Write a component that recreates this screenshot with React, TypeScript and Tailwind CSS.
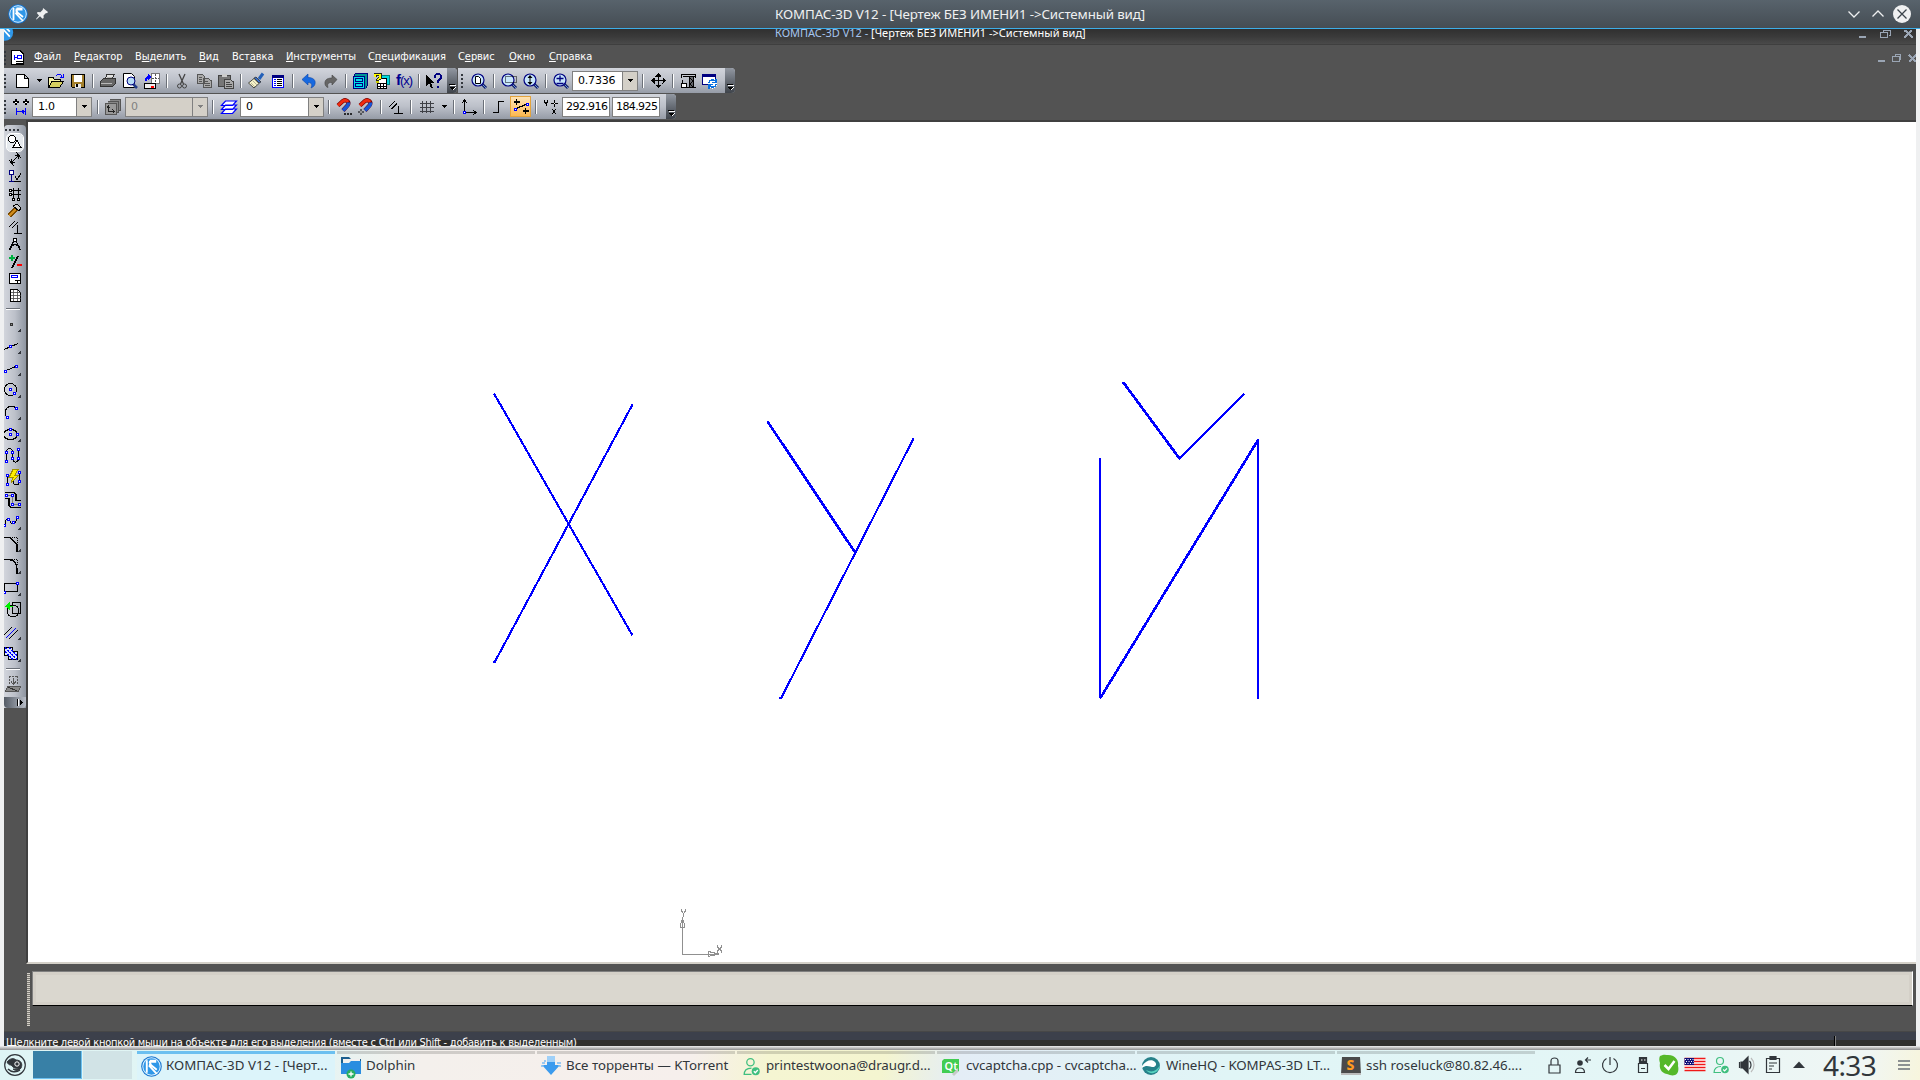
import type { ReactNode } from "react";
import clsx from "clsx";

const NAVY = "#000080";
const BLUE = "#0000ff";

/* ---------- small building blocks ---------- */

function Ico({ children, w = 16, h = 16, smooth = false }: { children: ReactNode; w?: number; h?: number; smooth?: boolean }) {
  return (
    <svg width={w} height={h} viewBox={`0 0 ${w} ${h}`} fill="none" stroke="#000" shapeRendering={smooth ? "auto" : "crispEdges"} className="block shrink-0 overflow-visible">
      {children}
    </svg>
  );
}

function Slot({ children, className }: { children: ReactNode; className?: string }) {
  return <div className={clsx("flex h-full w-[22px] shrink-0 items-center justify-center", className)}>{children}</div>;
}

function Sep() {
  return (
    <div className="flex h-full w-2 shrink-0 items-center justify-center">
      <div className="h-[14px] w-[2px] border-l border-[#6b7078] bg-white" />
    </div>
  );
}

function Grip() {
  return (
    <div className="flex h-full w-[3px] shrink-0 flex-col justify-center gap-[2px]">
      {[0, 1, 2, 3].map((i) => (
        <div key={i} className="h-[2px] w-[2px] bg-[#33373d]" />
      ))}
    </div>
  );
}

function Arrow({ className }: { className?: string }) {
  return (
    <div className={clsx("flex h-full shrink-0 items-center justify-center", className)}>
      <Ico w={5} h={3}>
        <path d="M0 0h5v1h-1v1h-1v1h-1v-1h-1v-1h-1z" fill="#000" stroke="none" />
      </Ico>
    </div>
  );
}

function EndCap() {
  return (
    <div className="ml-auto flex h-full w-[10px] shrink-0 items-end justify-center rounded-r-sm bg-linear-to-b from-[#9298a2] to-[#3f444b] pb-[3px]">
      <Ico w={6} h={6}>
        <path d="M0 0h6v1H0z M0 3h6l-3 3z" fill="#000" stroke="none" />
        <path d="M1 1.500h6 M4 6l3-3" stroke="#fff" />
      </Ico>
    </div>
  );
}

function Combo({ value, className, disabled }: { value: string; className: string; disabled?: boolean }) {
  return (
    <div
      className={clsx(
        "flex h-5 shrink-0 items-stretch border border-[#808080] font-['DejaVu_Sans','Noto_Sans',sans-serif] text-[11px] leading-[18px] tracking-[-0.200px]",
        disabled ? "bg-[#d4d0c8] text-[#808080]" : "bg-white text-black",
        className,
      )}
    >
      <span className="grow pl-[5px]">{value}</span>
      <div className="flex w-[15px] items-center justify-center border-l border-[#808080] bg-[#d4d0c8]">
        <Ico w={5} h={3}>
          <path d="M0 0h5l-2.500 3z" fill={disabled ? "#808080" : "#000"} stroke="none" />
        </Ico>
      </div>
    </div>
  );
}

function Lens({ children }: { children?: ReactNode }) {
  return (
    <Ico smooth>
      <path d="M11 11l4 4" stroke="#10206a" strokeWidth="3" />
      <path d="M11 11l4 4" stroke="#6f92d8" strokeWidth="1" />
      <circle cx="7" cy="7" r="6" fill="#c7e6fb" stroke={NAVY} strokeWidth="1.200" />
      {children}
    </Ico>
  );
}

function Node({ x, y }: { x: number; y: number }) {
  return <rect x={x - 1} y={y - 1} width="2" height="2" fill="#fff" stroke={BLUE} />;
}

function Magnet({ children }: { children?: ReactNode }) {
  return (
    <Ico smooth>
      <path d="M2 6.500l5-4.500c3-2 7 1 4.500 4.500l-4.500 5" stroke="#700" strokeWidth="4.200" />
      <path d="M2 6.500l5-4.500c2-1.500 4-.5 5 1" stroke="#f02a10" strokeWidth="3" />
      <path d="M12.500 3.500c0 1.500-.3 2.500-1 3.300l-4.500 4.700" stroke="#1656d8" strokeWidth="3.600" />
      {children}
    </Ico>
  );
}

function KompasLogo({ size }: { size: number }) {
  return (
    <svg width={size} height={size} viewBox="0 0 20 20" className="block shrink-0">
      <circle cx="10" cy="10" r="9.800" fill="#1674cf" />
      <circle cx="10" cy="10" r="8.300" fill="#2f97e8" stroke="#d8efff" strokeWidth="1" />
      <path d="M5.500 4v12M8.500 4.500l6 0M8 5.500l2 4M7.500 9l7.500 8M8.500 9V5.500h6M10 9l5 4" stroke="#fff" strokeWidth="1.800" fill="none" />
    </svg>
  );
}

/* ---------- window chrome ---------- */

function TitleBar() {
  return (
    <div className="grid h-7 grid-cols-[1fr_auto_1fr] items-center bg-linear-to-b from-[#58636c] to-[#454d54]">
      <div className="flex items-center pl-2">
        <KompasLogo size={20} />
        <svg width="12" height="12" viewBox="0 0 12 12" className="ml-[8px]">
          <path d="M7 0l5 4-1 1.200-1-.3-2.500 2.600.2 2.500-1.200.8L4 8.300.5 11.500 0 11l3-3.600L.8 5l1-1 2.500.2L6.800 1.800z" fill="#eff0f1" />
        </svg>
      </div>
      <div className="font-['Noto_Sans',sans-serif] text-[13.330px] leading-7 tracking-[-0.130px] text-[#eff0f1]">
        КОМПАС-3D V12 - [Чертеж БЕЗ ИМЕНИ1 -&gt;Системный вид]
      </div>
      <div className="flex items-center justify-end pr-[9px]">
        <svg width="66" height="18" viewBox="0 0 66 18" fill="none" stroke="#eff0f1" strokeWidth="1.300">
          <path d="M3.500 6.500l5.500 5.500 5.500-5.500M27.500 11.500l5.500-5.500 5.500 5.500" />
          <circle cx="57" cy="9" r="9" fill="#eff0f1" stroke="none" />
          <path d="M52.500 4.500l9 9M61.500 4.500l-9 9" stroke="#3b444b" />
        </svg>
      </div>
    </div>
  );
}

function MdiButtons() {
  return (
    <Ico w={56} h={9}>
      <path d="M1 7h7" stroke="#9aa5b4" strokeWidth="2" />
      <path d="M25.500 2V.5h7v5H31M22.500 2.500h7v5h-7z" stroke="#9aa5b4" />
      <path d="M46 1h2l7 7M54 1h-1l-7 7" stroke="#9aa5b4" strokeWidth="2" />
    </Ico>
  );
}

function InnerTitle() {
  return (
    <div className="flex h-[15px] items-start justify-between overflow-hidden bg-linear-to-b from-[#303030] via-[#3a3a3a] to-[#4a4a4a]">
      <div className="w-[771px]">
        <svg width="10" height="12" viewBox="8 6 12 14">
          <circle cx="9" cy="10" r="10" fill="#2f97e8" />
          <path d="M5 4l10 11M10 4l5 5" stroke="#fff" strokeWidth="2" />
        </svg>
      </div>
      <div className="-mt-[2px] grow font-['Noto_Sans',sans-serif] text-[11px] leading-[11px] text-white">
        <span className="text-[#a6c4ee]">КОМПАС-3D V12 - </span>[Чертеж БЕЗ ИМЕНИ1 -&gt;Системный вид]
      </div>
      <div className="pt-[1px] pr-[2px]">
        <MdiButtons />
      </div>
    </div>
  );
}

function MenuBar() {
  return (
    <div className="flex h-6 items-center overflow-hidden border-t border-[#3f3f3f] bg-[#535353] pt-[2px] font-['DejaVu_Sans_Condensed','DejaVu_Sans',sans-serif] text-[11px] tracking-[-0.070px] text-white">
      <div className="flex h-full w-[30px] items-center">
        <Grip />
        <div className="ml-1">
          <Ico w={13} h={15}>
            <path d="M1 .5h8l3.500 3.500v10.500H.5V.5z" fill="#fff" />
            <path d="M6 5.500h4v3H6zM3 7.500h3M3 5v5" stroke={BLUE} />
            <path d="M5 11.500h7M5 13.500h7" />
          </Ico>
        </div>
      </div>
      <span className="w-[40px]"><u>Ф</u>айл</span>
      <span className="w-[61px]"><u>Р</u>едактор</span>
      <span className="w-[64px]">В<u>ы</u>делить</span>
      <span className="w-[33px]"><u>В</u>ид</span>
      <span className="w-[54px]">Вст<u>а</u>вка</span>
      <span className="w-[82px]"><u>И</u>нструменты</span>
      <span className="w-[90px]">С<u>п</u>ецификация</span>
      <span className="w-[51px]">С<u>е</u>рвис</span>
      <span className="w-[40px]"><u>О</u>кно</span>
      <span><u>С</u>правка</span>
      <div className="-mr-[2px] ml-auto pt-[2px]">
        <Ico w={40} h={9}>
          <path d="M0 7h7" stroke="#9aa5b4" strokeWidth="2" />
          <path d="M17.500 2V.5h5v5H21M14.500 2.500h7v5h-7z" stroke="#9aa5b4" />
          <path d="M31 1l7 7M38 1l-7 7" stroke="#9aa5b4" strokeWidth="2" />
        </Ico>
      </div>
    </div>
  );
}

/* ---------- toolbars ---------- */

const barBg = "flex h-[25px] items-center rounded-r bg-linear-to-b from-[#d2d5dc] via-[#bcc0c9] to-[#969ca7]";

function MainToolbar() {
  return (
    <div className="flex h-[26px]">
      <div className={clsx(barBg, "w-[453px]")}>
        <Grip />
        <Slot className="ml-[4px]">
          <Ico><path d="M2.500 1.500h8l3.500 3.500v9.500H2.500zM10.500 1.500v4H14" fill="#fff" /></Ico>
        </Slot>
        <Arrow className="w-[12px]" />
        <Slot>
          <Ico>
            <path d="M.5 14V4.500H5l1 1.500h6v3" fill="#f8f4a8" />
            <path d="M.5 14.500l3.500-6h11.500l-4 6z" fill="#d6d060" />
            <path d="M8 3c2-3 5-2 6 1M11.500 4.500H15V1" stroke={BLUE} />
          </Ico>
        </Slot>
        <Slot>
          <Ico>
            <path d="M1.500 1.500h13v13h-12l-1-1z" fill="#a4802c" />
            <path d="M4 2h8v7H4z" fill="#fff" stroke="none" />
            <path d="M5 10.500h6v4H5z" fill="#e8e8e8" stroke="none" />
            <path d="M6.500 11v3" strokeWidth="2" />
          </Ico>
        </Slot>
        <Sep />
        <Slot>
          <Ico>
            <path d="M5 6l2-4.500h7L12 6" fill="#e2e2e2" stroke="#333" />
            <path d="M.5 8.500l3-3h12v5l-3 3H.5z" fill="#666" stroke="#333" />
            <path d="M1 10.500h11M7 4h5" stroke="#b8b8b8" />
          </Ico>
        </Slot>
        <Slot>
          <Ico smooth>
            <path d="M1.500.5h8l3 3v11h-11z" fill="#fff" />
            <path d="M11 11l4 4" stroke="#223c88" strokeWidth="2.500" />
            <circle cx="9" cy="8" r="4" fill="#b7dcf5" stroke={NAVY} />
          </Ico>
        </Slot>
        <Slot>
          <Ico>
            <path d="M7.500.5h8v10h-8z" fill="#fff" stroke="#777" />
            <path d="M11.500 1v9M8 5.500h7" stroke="#555" strokeDasharray="2 1" />
            <path d="M.5 10.500h11v5H.5z" fill="#eee" />
            <path d="M7 13.500h3" stroke="red" strokeWidth="2" />
            <path d="M2 8c0-3 1-4 3-4" stroke={BLUE} strokeWidth="2" />
            <path d="M4 0.500l4 3.500-4 3z" fill={BLUE} stroke="none" />
          </Ico>
        </Slot>
        <Sep />
        <Slot>
          <Ico smooth>
            <path d="M5 1l4.500 10M11 1L6.500 11" stroke="#444" strokeWidth="1.300" />
            <circle cx="5.500" cy="13" r="2" stroke="#444" />
            <circle cx="10.500" cy="13" r="2" stroke="#444" />
          </Ico>
        </Slot>
        <Slot>
          <Ico>
            <path d="M1.500 1.500h5l2 2v7h-7zM7.500 5.500h5l3 2.500v6.500h-8z" fill="#aaa" stroke="#555" />
            <path d="M3 4.500h3M3 6.500h3M3 8.500h3M9 8.500h3M9 10.500h5M9 12.500h5" stroke="#555" />
          </Ico>
        </Slot>
        <Slot>
          <Ico>
            <path d="M.5 2.500h12v11H.5z" fill="#777" stroke="#444" />
            <path d="M4 2.500h5" stroke="#ccc" strokeWidth="3" />
            <path d="M6.500 6.500h6l3 2.500v6h-9z" fill="#aaa" stroke="#444" />
            <path d="M8 9.500h4M8 11.500h6M8 13.500h6" stroke="#444" />
          </Ico>
        </Slot>
        <Sep />
        <Slot>
          <Ico smooth>
            <path d="M15 .5L11 6" stroke="#2360b8" strokeWidth="3" />
            <path d="M8 4l5 5-2 1-5-5z" fill="#3a6fc8" stroke="#222" strokeWidth=".7" />
            <path d="M6 5.500l5 5-5 4.500C4 13 2 11.500.5 10z" fill="#f7f3c8" stroke="#222" strokeWidth=".8" />
            <path d="M3 10l4 4M5 8l4 4" stroke="#998" strokeWidth=".7" />
          </Ico>
        </Slot>
        <Slot>
          <Ico>
            <path d="M2.500 2.500h11v12h-11z" fill="#fff" stroke={BLUE} />
            <path d="M2 3h12" stroke={NAVY} strokeWidth="3" />
            <path d="M4 6.500h2M4 8.500h2M4 10.500h2M4 12.500h2" stroke={BLUE} />
            <path d="M7 6.500h5M7 8.500h5M7 10.500h5M7 12.500h5" />
          </Ico>
        </Slot>
        <Sep />
        <Slot className="ml-px">
          <Ico smooth>
            <path d="M1 6.500L7 1v3.500c5 0 8 2.500 7 6.500-.5 2-2 3-4 4 1.500-3 1-5.500-3-5.500V12z" fill="#1769e0" stroke="#0c44a8" strokeWidth=".6" />
          </Ico>
        </Slot>
        <Slot>
          <Ico smooth>
            <path d="M14 6.500L9 2v3C4 5 1.500 7 2 11c.3 2 1.500 3 3 3.500C4 11 5 9.500 9 9.500V12z" fill="#666" stroke="#444" strokeWidth=".6" />
          </Ico>
        </Slot>
        <Sep />
        <Slot className="-ml-px">
          <Ico>
            <path d="M1.500 3.500l2-3h12v12l-2 3" fill="#009494" stroke={NAVY} />
            <path d="M1.500 3.500h11v12h-11z" fill="#00e0e8" stroke={NAVY} />
            <path d="M3.500 5.500h7v3h-7zM3.500 10.500h7v3h-7z" stroke={NAVY} />
          </Ico>
        </Slot>
        <Slot>
          <Ico>
            <path d="M6.500 2.500h9v9h-9z" fill="#00d8e0" stroke="#008080" />
            <path d="M4.500 5.500h8v8h-8z" fill="#fff" />
            <path d="M3.500 10.500h9v5h-9zM3 13h10M6.500 10v5M9.500 10v5" fill="#fff" />
            <path d="M1 4V1.500h5V5L3.500 7v2" stroke="#222" strokeWidth="3" />
            <path d="M1 4V1.500h5V5L3.500 6.500" stroke="#ff0" strokeWidth="1.500" />
            <path d="M2 9h3" stroke="#cc0" strokeWidth="2" />
          </Ico>
        </Slot>
        <Slot>
          <span className="font-['Liberation_Sans',sans-serif] text-[13px] leading-4 tracking-[-1px] text-[#000090]"><b className="text-[15px]">f</b>(x)</span>
        </Slot>
        <Sep />
        <Slot>
          <Ico>
            <path d="M0 2v11l3-3 2 5h2l-2-5h4z" fill="#000" stroke="none" />
            <path d="M9 5V2.500L10.500 1h3L15 2.500V5l-3 3v2M11 13.500h2" stroke={NAVY} strokeWidth="2" />
          </Ico>
        </Slot>
        <EndCap />
      </div>

      <div className={clsx(barBg, "ml-px w-[277px]")}>
        <div className="ml-[3px] h-full"><Grip /></div>
        <Slot className="ml-1">
          <Lens><path d="M4.500 3.500h3l2 2v5h-5z" fill="#fff" /></Lens>
        </Slot>
        <Sep />
        <Slot>
          <Lens><path d="M4.500 3.500h11v6h-11z" strokeDasharray="1 1" /></Lens>
        </Slot>
        <Slot>
          <Lens><path d="M7 3v8" /><path d="M4.500 5L7 2l2.500 3zM4.500 9L7 12l2.500-3z" fill="#000" stroke="none" /></Lens>
        </Slot>
        <Sep />
        <Slot>
          <Lens><path d="M3.500 5.500h7M7 2.500v6M3.500 10.500h7" stroke={NAVY} strokeWidth="1.300" /></Lens>
        </Slot>
        <Combo value="0.7336" className="w-[66px]" />
        <div className="w-px" />
        <Sep />
        <Slot>
          <Ico w={15} h={15}>
            <path d="M0 7.500h15M7.500 0v15" />
            <path d="M7.500 0l3 3.500h-6zM7.500 15l3-3.500h-6zM0 7.500l3.500-3v6zM15 7.500l-3.500-3v6z" fill="#000" stroke="none" />
          </Ico>
        </Slot>
        <Sep />
        <Slot>
          <Ico>
            <path d="M1.500 5V1.500h14v3M3 3.500h12M9.500 4v11M13.500 4v11M9.500 5l4 3-4 3 4 3M2 7v3" />
            <path d="M1.500 10.500h5v4h-5zM.5 14.500h15" fill="#fff" />
            <path d="M9 4h5v11H9z" fill="#000" fillOpacity=".45" stroke="none" />
          </Ico>
        </Slot>
        <Slot>
          <Ico>
            <path d="M.5 1.500h13v10H.5z" fill="#fff" stroke={NAVY} />
            <path d="M.5 2.500h13" stroke={NAVY} strokeWidth="3" />
            <circle cx="10.500" cy="10.500" r="5" fill="#fff" stroke="none" />
            <path d="M7 10c0-3 4-4 6-2M14 5.500v4h-4M14 11c0 3-4 4-6 2M7 15.500v-4h4" stroke="#0870e0" strokeWidth="1.500" />
          </Ico>
        </Slot>
        <EndCap />
      </div>
    </div>
  );
}

function StateToolbar() {
  const field = "h-5 shrink-0 overflow-hidden border border-[#808080] bg-white pl-[3px] font-['DejaVu_Sans',sans-serif] text-[11px] leading-[17px] tracking-[-0.600px] text-black";
  return (
    <div className="flex h-[26px]">
      <div className={clsx(barBg, "w-[672px]")}>
        <Grip />
        <Slot className="ml-[3px]">
          <Ico>
            <path d="M3 0v6M0 3h6M13 0v6M10 3h6" strokeWidth="1.500" />
            <path d="M2 3h2M12 3h2" stroke="#fff" />
            <path d="M3.500 9v7M12.500 9v7M4 12.500h8M10.500 10.500v4M9 11v3" stroke={BLUE} />
          </Ico>
        </Slot>
        <Combo value="1.0" className="w-[60px]" />
        <div className="w-[2px]" />
        <Sep />
        <Slot>
          <Ico>
            <path d="M4.500.5h11v11h-3M2.500 2.500h11v11h-3" fill="#888" stroke="#555" />
            <path d="M.5 4.500h11v11H.5z" fill="#999" stroke="#555" />
            <path d="M3.500 7v5.500h6M2 9l1.500-2L5 9M7.500 10.500l2 2-2 2" stroke="#222" />
          </Ico>
        </Slot>
        <Combo value="0" className="ml-px w-[83px]" disabled />
        <div className="w-px" />
        <Sep />
        <Slot className="ml-px">
          <Ico smooth>
            <path d="M.5 14.500l4-4.500h11l-4 4.500zM.5 10.500L4.500 6h11l-4 4.500zM.5 6.500L4.500 2h11l-4 4.500z" fill="#fff" stroke={BLUE} strokeWidth="1.200" />
          </Ico>
        </Slot>
        <Combo value="0" className="w-[84px]" />
        <div className="w-px" />
        <Sep />
        <Slot>
          <Magnet><path d="M8 15h2M11 15h2M14 15h2" strokeWidth="1.500" /></Magnet>
        </Slot>
        <Slot>
          <Magnet><path d="M3 10v6M0 13h6" /><path d="M2 13h2" stroke="#fff" /></Magnet>
        </Slot>
        <Sep />
        <Slot>
          <Ico><path d="M1 8l6-6M3.500 10L9 4.500M10.500 7v7M6 14.500h9" /></Ico>
        </Slot>
        <Sep />
        <Slot className="ml-px">
          <Ico><path d="M3.500 2v12M7.500 2v12M11.500 2v12M1 4.500h14M1 8.500h14M1 12.500h14" stroke="#3e4046" /></Ico>
        </Slot>
        <Arrow className="ml-px w-[11px]" />
        <Sep />
        <Slot>
          <Ico><path d="M3.500 1v12.500H15M1 4l2.500-3L6 4M12 11l3 2.500-3 2.500" /><Node x={3.500} y={13.500} /></Ico>
        </Slot>
        <Sep />
        <Slot>
          <Ico><path d="M2 13.500h5.500v-11H13" /></Ico>
        </Slot>
        <div className="flex h-[21px] w-[21px] shrink-0 items-center justify-center border border-[#e3a33c] bg-linear-to-b from-[#fde3b4] to-[#fcb850]">
          <Ico>
            <path d="M2 10l12-5M3.500 0v6M.5 3h6M12.500 9v6M9.500 12h6" strokeWidth="1.300" />
            <Node x={2} y={10} />
            <Node x={14.500} y={5} />
          </Ico>
        </div>
        <div className="w-px" />
        <Sep />
        <Slot>
          <Ico><path d="M1.500 1v2l1.500 2 1.500-2V1M3 4v3M11.500 1v7M8 4.500h7M9 10l4 5M13 10l-4 5" /><path d="M11 4.500h1" stroke="#fff" /></Ico>
        </Slot>
        <div className={clsx(field, "w-[48px]")}>292.916</div>
        <div className={clsx(field, "ml-[2px] w-[48px]")}>184.925</div>
        <EndCap />
      </div>
    </div>
  );
}

/* ---------- left compact panel ---------- */

const switchers: ReactNode[] = [
  <><circle cx="5" cy="5" r="3.500" fill="#fff" /><path d="M6 13.500h8L10 6z" fill="#fff" /></>,
  <><path d="M4 12l8-8M2 9l5 6M9 1l5 6M4.500 12V8M4 11.500h4M11.500 4v4M12 4.500H8" /></>,
  <><path d="M2.500 2.500h4v4h-4zM4.500 7v6M2 13.500h5" stroke={NAVY} fill="#fff" /><path d="M7 13.500h7M8 8l2 4 4-7" /></>,
  <><path d="M6.500 3v11M11.500 3v11M4 5.500h10M4 9.500h10" /><path d="M2.500 4.500h2v2h-2zM2.500 8.500h2v2h-2zM5.500 13.500h2v2h-2zM10.500 13.500h2v2h-2z" fill="#fff" /></>,
  <><path d="M2 14l7-7" stroke="#7a4a00" strokeWidth="4.500" /><path d="M2 14l7-7" stroke="#d08a18" strokeWidth="2.500" /><path d="M6 4l4-2 4 4-2 3z" fill="#ccc" /></>,
  <><path d="M2 8l6-6M5 9l6-6M10.500 6v8M7 14.500h8" /></>,
  <><path d="M2.500 14L8 3l5.500 11M3 14l2-4M13 14l-2-4M3 11c3-3 7-3 10 0" strokeWidth="1.300" /><circle cx="8" cy="4" r="2" fill="#fff" /></>,
  <><path d="M5 2v6M2 5h6" stroke="#00b040" strokeWidth="2" /><path d="M5 15L11 3" strokeWidth="1.500" /><path d="M10 12h5" stroke="red" strokeWidth="2" /></>,
  <><path d="M2.500 3.500h11v10h-11zM8 10.500h6M10.500 11v3" fill="#fff" strokeWidth="1.500" /><path d="M4.500 5.500h6v2h-6z" stroke={BLUE} /></>,
  <><path d="M3.500 2.500h7l3 3v9h-10z" fill="#fff" /><path d="M3.500 5.500h10M3.500 8.500h10M3.500 11.500h10M6.500 3v11M10.500 3v11" stroke="#444" strokeWidth=".8" /></>,
];

// drawn on a 22px cell, measured from the left edge of the panel
const drawTools: { art: ReactNode; more?: boolean }[] = [
  { more: true, art: <rect x="6.500" y="9.500" width="2" height="2" fill="#888" stroke="#333" /> },
  { more: true, art: <><path d="M0 13.500l14-6" /><Node x={6.500} y={10.500} /></> },
  { more: true, art: <><path d="M1 13l12-5" /><Node x={1.500} y={13.500} /><Node x={12.500} y={8.500} /></> },
  { more: true, art: <><circle cx="6.500" cy="9.500" r="6" /><Node x={6.500} y={9.500} /><Node x={10.500} y={13.500} /></> },
  { more: true, art: <><path d="M2 14C-1 7 6 1 12 6" /><Node x={3.500} y={15.500} /><Node x={12.500} y={6.500} /></> },
  { more: true, art: <><ellipse cx="6.500" cy="10.500" rx="7" ry="5" /><Node x={6.500} y={5.500} /><Node x={13.500} y={10.500} /><Node x={6.500} y={10.500} /></> },
  { art: <><path d="M2.500 15V6c0-5 6-4 6 0v6c0 6 6 5 6 0V3" /><Node x={2.500} y={15.500} /><Node x={2.500} y={6.500} /><Node x={8.500} y={6.500} /><Node x={8.500} y={12.500} /><Node x={14.500} y={12.500} /><Node x={14.500} y={3.500} /></> },
  { art: <><path d="M3.500 16V7M15.500 5v9c-1 5-7 3-6-1" /><Node x={3.500} y={16.500} /><Node x={3.500} y={7.500} /><Node x={15.500} y={4.500} /><Node x={15.500} y={13.500} /><path d="M9 1.500h5L11 7h4l-8 8 2-5.500H5z" fill="#ffee00" stroke="#a09000" /></> },
  { art: <><path d="M1 2.500h9l2 2v6h5M1 8.500h4v7l2 2h10" strokeWidth="1.300" /><path d="M2 5.500h6.500v9H16" stroke="#777" /><Node x={2.500} y={5.500} /><Node x={8.500} y={5.500} /><Node x={8.500} y={14.500} /><Node x={15.500} y={14.500} /></> },
  { more: true, art: <><path d="M1 13c0-8 4-7 5-4s5 5 7-3" /><Node x={0.500} y={13.500} /><Node x={4.500} y={7.500} /><Node x={9.500} y={10.500} /><Node x={13.500} y={5.500} /></> },
  { more: true, art: <><path d="M0 3.500h6l7 7V18" strokeWidth="1.500" /><path d="M6 3.500h7.500V10" strokeDasharray="1 1" /></> },
  { more: true, art: <><path d="M0 3.500h4c6 0 9 4 9 10V18" strokeWidth="1.500" /><path d="M6 3.500h7.500V10" strokeDasharray="1 1" /></> },
  { more: true, art: <><path d="M0 5.500h13.500v8H0z" /><Node x={0.500} y={14} /><Node x={13.500} y={5} /></> },
  { art: <><circle cx="9" cy="11" r="6" /><path d="M8.500 2.500h8v11h-8z" /><path d="M1 6h8M2 6l3-3v6z" stroke="#0e0" fill="#0e0" /></> },
  { more: true, art: <><path d="M0 13l8-8M5 17l9-9" /><path d="M2 16L12 6" stroke={BLUE} /></> },
  { more: true, art: <><path d="M0 3.500h8.500v4h5v8H4.500v-4H0z" fill="#d8e4ff" strokeWidth="1.500" /><path d="M1 4l12 11M5 4l8 7M1 8l8 7" stroke={BLUE} strokeDasharray="2 1" strokeWidth="1.500" /></> },
];

function SidePanel() {
  return (
    <div className="flex h-[583px] w-[22px] flex-col overflow-hidden rounded-t-sm bg-linear-to-r from-[#d2d5dc] via-[#bcc0c9] to-[#8f96a1]">
      <div className="flex h-[9px] items-center gap-[2px] pl-px">
        {[0, 1, 2, 3].map((i) => (
          <div key={i} className="h-[2px] w-[2px] bg-[#33373d]" />
        ))}
      </div>
      {switchers.map((art, i) => (
        <div key={i} className={clsx("ml-[3px] flex h-[17px] w-[16px] items-start justify-center", i === 0 && "rounded-sm bg-[#e6eaee] outline-1 outline-white")}>
          <Ico>{art}</Ico>
        </div>
      ))}
      <div className="mt-[4px] ml-[2px] h-[2px] w-[14px] border-t border-[#6b7078] bg-white" />
      <div className="mt-[4px]">
        {drawTools.map((t, i) => (
          <Ico key={i} w={22} h={22}>
            {t.art}
            {t.more && <path d="M17 14v4h-4z" fill="#33363c" stroke="none" />}
          </Ico>
        ))}
      </div>
      <div className="mt-[2px] ml-[2px] h-[2px] w-[14px] border-t border-[#6b7078] bg-white" />
      <div className="mt-[4px]">
        <Ico w={22} h={22}>
          <path d="M5 2.500h9M5.500 2v8M13.500 2v8" stroke="#555" strokeDasharray="2 1" />
          <path d="M9.500 4v6M7 7.500l2.500 3 2.500-3" stroke="#555" />
          <path d="M3.500 12.500h13l-2 5h-13z" fill="#888" stroke="#555" />
          <path d="M4 13l9 4" stroke="#333" />
        </Ico>
      </div>
      <div className="mt-auto flex h-[11px] items-center justify-end rounded-b-sm bg-linear-to-r from-[#555c66] to-[#b9bec8] pr-[3px]">
        <Ico w={6} h={7}><path d="M0 0h1v7H0zM3 0l3 3.500L3 7z" fill="#000" stroke="none" /><path d="M1.500 0v7" stroke="#fff" /></Ico>
      </div>
    </div>
  );
}

/* ---------- drawing area ---------- */

function Canvas() {
  return (
    <div className="h-[844px] grow border-t-2 border-b-2 border-l-2 border-t-[#404040] border-b-[#d4d0c8] border-l-[#404040] bg-white">
      <svg width="1888" height="840" viewBox="28 122 1888 840" fill="none" stroke={BLUE} strokeWidth="2" shapeRendering="crispEdges" className="block">
        <path d="M494 393.500L632.500 635.500M632.500 404.500L494.500 662.500M493 662h2" strokeWidth="2.100" />
        <path d="M767.500 421.500l88 131.500" strokeWidth="2.700" />
        <path d="M913.500 438.500l-132.500 260M779 698h2" strokeWidth="2.100" />
        <path d="M1123 382l56.500 76.500 64.500-64.500" strokeWidth="2.700" />
        <path d="M1100 458v240M1258 439v260" />
        <path d="M1100 698.500L1258 440" strokeWidth="2.600" />
        <g stroke="#909090" strokeWidth="1">
          <path d="M682.500 918v36.500H719M680.500 927.500h4v-3l-2-6-2 6zM708.500 951.500v5l10-2.500z" />
          <path d="M681.500 909v2l2 2.500 2-2.500v-2M683.500 913v4M717.500 945v2l4 4v2M721.500 945v2l-4 4v2" />
        </g>
      </svg>
    </div>
  );
}

function BottomPanels() {
  return (
    <>
      <div className="flex h-[67px] bg-[#535353] pt-[7px]">
        <div className="mt-[2px] ml-[23px] h-[53px] w-[3px] bg-[repeating-linear-gradient(to_bottom,#d4d0c8_0_1px,#77756f_1px_2px)]" />
        <div className="mr-[3px] ml-[2px] h-[35px] grow border border-t-[#808080] border-r-white border-b-black border-l-[#808080] bg-[#dad7cf] shadow-[inset_0_0_0_3px_#d4d0c8]" />
      </div>
      <div className="flex h-[15px] overflow-hidden border-t border-[#474747] bg-linear-to-b from-[#3c404b] from-55% to-[#30302e] to-56%">
        <div className="mt-[4px] w-[1830px] pl-[2px] font-['DejaVu_Sans_Condensed','DejaVu_Sans',sans-serif] text-[11px] leading-[14px] tracking-[-0.250px] whitespace-nowrap text-white">
          Щелкните левой кнопкой мыши на объекте для его выделения (вместе с Ctrl или Shift - добавить к выделенным)
        </div>
        <div className="mt-1 h-full w-[2px] border-l border-black bg-[#808080]" />
      </div>
    </>
  );
}

/* ---------- desktop task bar ---------- */

const tasks: { title: string; icon: ReactNode; active?: boolean; tight?: boolean }[] = [
  { title: "КОМПАС-3D V12 - [Черт...", active: true, icon: <KompasLogo size={21} /> },
  {
    title: "Dolphin",
    icon: (
      <svg width="22" height="22" viewBox="0 0 22 22" className="overflow-visible">
        <path d="M1 2h8l2 2h10v4H1z" fill="#1b5f8f" />
        <path d="M3 4h17v5H3z" fill="#f0f0f0" />
        <path d="M1 8h8l2-2h10v13H1z" fill="#2a8de0" />
        <circle cx="11" cy="19" r="4.500" fill="#27ae60" />
        <path d="M11 16.500v5M8.500 19h5" stroke="#fff" strokeWidth="1.300" />
      </svg>
    ),
  },
  {
    title: "Все торренты — KTorrent",
    icon: (
      <svg width="22" height="22" viewBox="0 0 22 22">
        <path d="M7 1h8v9h5l-9 10-9-10h5z" fill="#3b9bee" />
        <path d="M7 1h8v6H7z" fill="#9fd0f8" />
        <path d="M2 8h3M17 8h4M1 11h3M18 11h3M4 6h2" stroke="#7bbcf2" strokeWidth="1.500" />
      </svg>
    ),
  },
  { title: "printestwoona@draugr.d...", tight: true, icon: <UserIcon size={19} /> },
  {
    title: "cvcaptcha.cpp - cvcaptcha...",
    tight: true,
    icon: (
      <svg width="22" height="22" viewBox="0 0 22 22">
        <path d="M4 4h15v12l-3 2H2V6z" fill="#41cd52" />
        <text x="4.500" y="15" fontSize="11" fontFamily="Noto Sans, sans-serif" fontWeight="600" fill="#fff">Qt</text>
        <path d="M12 19l6-6v4l-4 4z" fill="#c9c9c9" />
      </svg>
    ),
  },
  {
    title: "WineHQ - KOMPAS-3D LT...",
    tight: true,
    icon: (
      <svg width="22" height="22" viewBox="0 0 22 22">
        <circle cx="11" cy="11" r="9" fill="#27818a" />
        <path d="M2 11c4-6 10-7 13-4 2 2 1 4-1 5-5 0-7-3-12 1z" fill="#fff" />
        <path d="M6 15c6 3 11 1 14-5-1 8-9 11-14 5z" fill="#57d3c0" />
      </svg>
    ),
  },
  {
    title: "ssh roseluck@80.82.46....",
    icon: (
      <svg width="22" height="22" viewBox="0 0 22 22">
        <path d="M2 2h18l1 17H1z" fill="#4a4a4a" />
        <path d="M1 18h20v2H1z" fill="#bbb" />
        <text x="6.500" y="15" fontSize="14" fontFamily="Noto Sans, sans-serif" fontWeight="800" fill="#ff9a1f">S</text>
      </svg>
    ),
  },
];

function UserIcon({ size }: { size: number }) {
  return (
    <svg width={size} height={size} viewBox="0 0 18 18" fill="none" stroke="#3fbf7f" strokeWidth="1.200">
      <circle cx="8" cy="5" r="3.500" />
      <path d="M2 17c0-5 3-6.500 7-6.500M2 16.500h7" />
      <circle cx="13" cy="13.500" r="3.800" fill="#3fbf7f" stroke="none" />
      <path d="M11.200 13.500l1.400 1.400 2.400-2.600" stroke="#fff" />
    </svg>
  );
}

function TrayIcon({ children, w }: { children: ReactNode; w: string }) {
  return (
    <div className={clsx("flex justify-center", w)}>
      <svg width="20" height="22" viewBox="0 0 20 22" fill="none" stroke="#31363b" strokeWidth="1.200" className="overflow-visible">{children}</svg>
    </div>
  );
}

function TaskBar() {
  return (
    <div className="flex h-[30px] bg-[linear-gradient(100deg,#dff5f5_0%,#e3f5f4_16%,#f4f0ec_22%,#f6efec_36%,#f5f5d2_40%,#f4f5d0_46%,#e4edf6_50%,#e0f5f6_64%,#e4f6f6_85%,#f0f6f4_97%,#f7f5dd_100%)] font-['Noto_Sans',sans-serif] text-[#31363b]">
      <div className="flex w-[33px] items-center pl-[4px]">
        <svg width="22" height="22" viewBox="0 0 22 22" fill="none" stroke="#31363b">
          <circle cx="11" cy="11" r="10.300" strokeWidth="1.200" />
          <path d="M3 8c3-4 7-4 9-2 5 0 7 4 5 8-2 3-6 3-8 1 3 1 5 0 6-1-5 1-6-1-8-3-2 0-3-1-4-3z" fill="#31363b" />
          <circle cx="13" cy="10" r="2.200" stroke="#fff" />
          <path d="M4 15c3 3 8 4 12 1" strokeWidth="1.500" />
        </svg>
      </div>
      <div className="mt-px h-[28px] w-[49px] border-r border-b border-[#6cc0f0] bg-[#3880a6]" />
      <div className="mt-px ml-px h-[28px] w-[49px] bg-[#d1e3e6]" />
      <div className="ml-[5px] flex gap-[2px]">
        {tasks.map((t) => (
          <div key={t.title} className={clsx("mt-px flex h-[29px] w-[198px] items-center border-t-3 pb-[2px] pl-[3px]", t.active ? "border-[#6cc0f0] bg-[#dcf4fa]" : "border-black/15")}>
            <div className="flex w-[22px] shrink-0 justify-center">{t.icon}</div>
            <span className={clsx("ml-1 text-[13.330px] whitespace-nowrap", t.tight && "tracking-[-0.080px]")}>{t.title}</span>
          </div>
        ))}
      </div>
      <div className="ml-[5px] flex items-center">
        <TrayIcon w="w-7">
          <path d="M5 11h11v8H5zM7 11V7c0-4 7-4 7 0v4" />
        </TrayIcon>
        <TrayIcon w="w-7">
          <circle cx="8" cy="9" r="2.800" fill="#31363b" stroke="none" />
          <path d="M3.500 18.500c0-6 9-6 9 0zM19 6h-5.500M16 3.500L13.500 6 16 8.500" />
        </TrayIcon>
        <TrayIcon w="w-7">
          <path d="M6.500 4.500a7.500 7.500 0 1 0 7 0M10 3v8" />
        </TrayIcon>
        <div className="w-[6px]" />
        <TrayIcon w="w-[26px]">
          <path d="M6.500 3.500h7v6h-7z" fill="#31363b" />
          <path d="M5.500 9.500h9v9h-9zM8 14.500h4" />
          <path d="M8 6h1.500M11 6h1.500" stroke="#fff" />
        </TrayIcon>
        <TrayIcon w="w-[26px]">
          <path d="M1 2c4-2 6-1 8-1 8 0 11 6 10 11 1 4 0 8-3 9-3 1-5 0-8-1C2 19 0 14 1 9c-1-3-1-5 0-7z" fill="#55b82a" stroke="none" />
          <path d="M5.500 11l4 4 6-8" stroke="#fff" strokeWidth="2.500" />
        </TrayIcon>
        <TrayIcon w="w-[26px]">
          <path d="M-.5 4h21v13h-21z" fill="#fff" stroke="none" />
          <path d="M-.5 4.500h21M-.5 7.500h21M-.5 10.500h21M-.5 13.500h21M-.5 16.500h21" stroke="#f01818" strokeWidth="1.400" />
          <path d="M-.5 4h9.500v7h-9.500z" fill="#10107a" stroke="none" />
          <path d="M0 5.500h9M1 7.500h8M0 9.500h9" stroke="#fff" strokeDasharray="1 1.500" />
        </TrayIcon>
        <div className="flex w-[26px] justify-center pb-px"><UserIcon size={18} /></div>
        <TrayIcon w="w-[26px]">
          <path d="M2.500 8v6M4 8h2l5-5v16l-5-5H4z" fill="#31363b" />
          <path d="M12.500 7c2 2 2 6 0 8" />
          <path d="M14 4c4 4 4 10 0 14" stroke="#bbb" />
        </TrayIcon>
        <TrayIcon w="w-[26px]">
          <path d="M3.500 4.500h13v14h-13z" />
          <path d="M7 2.500h6v3H7z" fill="#31363b" />
          <path d="M6 9h8M6 12h5M6 15h3" />
        </TrayIcon>
        <TrayIcon w="w-[26px]">
          <path d="M4 14l6-6.500 6 6.500z" fill="#31363b" stroke="none" />
        </TrayIcon>
      </div>
      <span className="ml-[11px] w-[75px] text-[28px] leading-[31px] tracking-[-0.600px]">4:33</span>
      <div className="flex flex-col justify-center gap-[2px] pb-px">
        <div className="h-[2px] w-3 bg-[#8c9092]" />
        <div className="h-[2px] w-3 bg-[#8c9092]" />
        <div className="h-[2px] w-3 bg-[#8c9092]" />
      </div>
    </div>
  );
}

export default function App() {
  return (
    <div className="flex h-[1080px] w-[1920px] flex-col overflow-hidden bg-[#535353]">
      <TitleBar />
      <div className="h-px bg-[#3daee9]" />
      <div className="flex h-[1017px] flex-col border-x-4 border-[#eff0f1] bg-[#535353]">
        <InnerTitle />
        <MenuBar />
        <MainToolbar />
        <StateToolbar />
        <div className="flex h-[844px]">
          <div className="w-[22px] pt-[5px]">
            <SidePanel />
          </div>
          <Canvas />
        </div>
        <BottomPanels />
      </div>
      <div className="h-1 bg-linear-to-b from-[#efefef] via-[#bdbdbd] to-[#8f8f8f]" />
      <TaskBar />
    </div>
  );
}
